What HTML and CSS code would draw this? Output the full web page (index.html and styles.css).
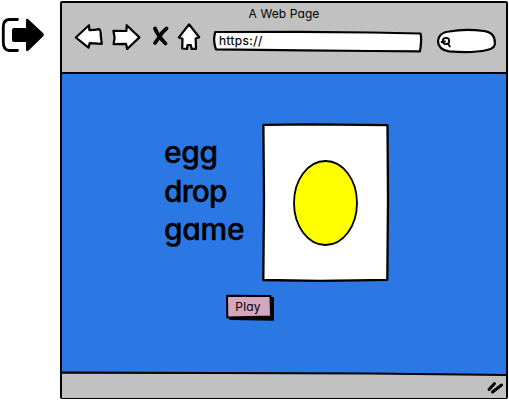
FILE: index.html
```html
<!DOCTYPE html>
<html lang="en">
<head>
<meta charset="utf-8">
<title>A Web Page</title>
<link rel="stylesheet" href="styles.css">
</head>
<body>
<aside class="side">
<svg class="exit" viewBox="0 16 46 38" width="46" height="38"><path class="bracket" d="M17.5 19.5H9Q3.3 20 3.3 27V42Q3.3 50 9 50.5H17.5"/><path d="M12 29.5Q12 28 14 28H26V20Q26 18 28 19L43.5 33.5Q44.5 35 43 36.5L28 51Q26 51.5 26 50V42H14Q12 42 12 40Z"/></svg>
</aside>
<main class="window">
<header class="chrome">
<h1 class="title"><span>A Web Page</span></h1>
<nav class="toolbar">
<svg class="sketch back" viewBox="74 22 30 30" width="30" height="30"><path d="M75.8 37.5L89 25.2L89.4 30.2Q95 30 99 29.2Q100.8 29.5 100.8 36L101.8 43.8L89.7 43.2L88.5 47.6Z"/></svg>
<svg class="sketch forward" viewBox="111 22 30 30" width="30" height="30"><path d="M113.4 30.8L126.4 31L126.7 25.2L139.4 37.4L127.2 49L126 43.8L113.6 44.2L114.6 37.5Z"/></svg>
<svg class="cross" viewBox="151 22 20 30" width="20" height="30"><path d="M155 28.5Q158 36 165.5 43.5M166.5 28.5Q162 32 160 36L155 43"/></svg>
<svg class="sketch home" viewBox="176 22 26 30" width="26" height="30"><path d="M189 24.3L199.2 37.3L195.7 38.5L196 48.8L191.7 48.9L190.8 45H187.6L187 49L182.2 48.5L182.5 38.7L178.8 37.5Z"/></svg>
<div class="address"><svg class="sketch" viewBox="212 28 212 26" width="212" height="26"><path d="M215.2 32L300 31.8L371 32.5L420.5 33.5Q422 39 420 51.3L371 51L302 50.3L216 49.3Q212.7 41 215.2 32Z"/></svg><span>https://</span></div>
<div class="search"><svg class="sketch" viewBox="435 27 64 28" width="64" height="28"><path d="M449 31.5Q465 28.5 484 31Q494.8 32.5 494.8 42Q496 48 487 50Q473 53.2 449 51.4Q438 49.5 438 41Q439 32.5 449 31.5Z"/><g class="lens"><circle cx="446" cy="41" r="3.2"/><path d="M441.6 42L445 41.5M448 43.5L449.8 46.5"/></g></svg></div>
</nav>
</header>
<section class="page">
<div class="hero">
<p class="name"><span class="egg">egg</span><span class="drop">drop</span><span class="game">game</span></p>
<svg class="card" viewBox="261 122 129 161" width="129" height="161"><path d="M263.4 124.8L310 124.3L387.5 125.2L388 200L387.3 279.8L320 280.8L263.3 280L264 200Z"/><ellipse cx="325.5" cy="203" rx="31.5" ry="42"/></svg>
</div>
<button class="play"><svg viewBox="225 293 50 30" width="50" height="30"><path class="shadow" d="M229 298L274 297V320.7L229.5 320Z"/><path class="face" d="M227 295.8L270.5 296L271 316.5L227.3 317.5Z"/></svg><span>Play</span></button>
</section>
<footer class="status"><svg viewBox="62 371 444 27" width="444" height="27"><path class="fill" d="M62 372.8L220 373.2L370 373.6L506 375.2V398H62Z"/><path class="edge" d="M62 372.6L220 373L370 373.5L506 375"/><path class="grip" d="M489 389.5L494.5 383.5M492.5 392L501.5 385"/></svg></footer>
</main>
</body>
</html>
```
FILE: styles.css
```css
* { box-sizing: border-box; }
body {
  margin: 0;
  width: 509px;
  height: 400px;
  display: flex;
  overflow: hidden;
  background: #fff;
  color: #000;
  font-family: Inter, "Liberation Sans", sans-serif;
  font-feature-settings: "cv11" 1;
}
svg { display: block; flex: none; }
.side { width: 60px; padding-top: 16px; }
.bracket { fill: none; stroke: #000; stroke-width: 2.8; stroke-linecap: round; }
.window {
  width: 448px;
  height: 398px;
  margin-top: 1px;
  border: 2px solid #000;
  border-radius: 2px;
  display: flex;
  flex-direction: column;
  background: #c1c1c1;
}
.chrome { height: 70.5px; border-bottom: 2px solid #000; }
.title {
  margin: 0;
  height: 19px;
  line-height: 21px;
  text-align: center;
  font-size: 12px;
  font-weight: 400;
  letter-spacing: .1px;
}
.toolbar { display: flex; height: 34px; align-items: flex-start; padding-left: 12px; }
.sketch { fill: #fff; stroke: #000; stroke-width: 2.2; stroke-linejoin: round; stroke-linecap: round; }
.lens { stroke-width: 1.8; }
.forward { margin-left: 7px; }
.cross { margin-left: 10px; fill: none; stroke: #000; stroke-width: 3.8; stroke-linecap: round; }
.home { margin-left: 5px; }
.address { display: grid; width: 212px; margin: 6px 0 0 10px; }
.address > * { grid-area: 1 / 1; }
.address span { z-index: 1; padding-left: 7px; font-size: 12px; line-height: 25px; letter-spacing: .4px; -webkit-text-stroke: .2px #000; }
.search { margin: 5px 0 0 11px; }
.page {
  height: 298.5px;
  padding-top: 48.5px;
  background: #2b78e4;
}
.hero { display: flex; padding-left: 102px; }
.name {
  margin: 0;
  width: 97px;
  padding-top: 11px;
  display: flex;
  flex-direction: column;
  font-size: 30px;
  font-weight: 500;
  line-height: 38.5px;
  letter-spacing: -.3px;
  -webkit-text-stroke: .4px #000;
  stroke-linejoin: round;
}
.name span { white-space: nowrap; }
.drop { letter-spacing: -.9px; }
.card { stroke: #000; stroke-width: 2.3; stroke-linejoin: round; fill: #fff; }
.card ellipse { fill: #ff0; stroke-width: 1.8; }
.play {
  display: grid;
  width: 50px;
  height: 30px;
  margin: 10px 0 0 163px;
  padding: 0;
  border: 0;
  background: none;
  color: inherit;
  font: inherit;
  font-size: 12px;
}
.play > * { grid-area: 1 / 1; }
.play span { z-index: 1; padding-right: 4px; line-height: 28px; letter-spacing: .15px; }
.face { fill: #d5a6bd; stroke: #000; stroke-width: 2; stroke-linejoin: round; }
.status { height: 25px; margin-top: -1px; background: #2b78e4; }
.fill { fill: #c1c1c1; }
.edge { fill: none; stroke: #000; stroke-width: 2.2; }
.grip { fill: none; stroke: #000; stroke-width: 3; stroke-linecap: round; }
```
